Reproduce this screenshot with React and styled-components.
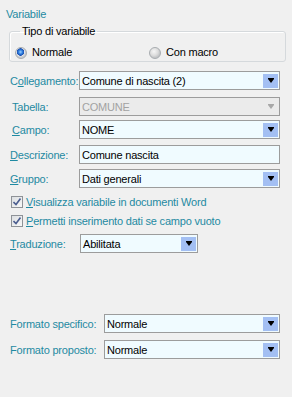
import React from "react";
import styled, { createGlobalStyle } from "styled-components";

const GlobalStyle = createGlobalStyle`
  html, body {
    margin: 0;
    padding: 0;
    background: #f0f0f0;
  }
  body {
    font-family: "Liberation Sans", Arial, sans-serif;
    font-size: 11px;
    letter-spacing: -0.2px;
  }
`;

const Panel = styled.div`
  width: 292px;
  height: 397px;
  box-sizing: border-box;
  padding-top: 8px;
  display: flex;
  flex-direction: column;
  background: #f0f0f0;
`;

const Title = styled.div`
  margin-left: 6px;
  height: 13px;
  line-height: 13px;
  color: #1f8aa2;
`;

const GroupBox = styled.fieldset`
  margin: 4px 6px 0 9px;
  padding: 8px 0 2px 5px;
  border: 1px solid #d5d9dc;
  border-radius: 3px;
  box-shadow: inset 1px 1px 0 #fff;
  min-width: 0;
`;

const Legend = styled.legend`
  margin-left: 5px;
  padding: 0 2px;
  line-height: 13px;
  color: #000;
`;

const RadioRow = styled.div`
  display: grid;
  grid-template-columns: 134px 1fr;
  height: 13px;
  align-items: center;
`;

const RadioOption = styled.label`
  display: flex;
  align-items: center;
  gap: 5px;
  color: #000;
  line-height: 13px;
`;

const RadioDot = styled.span`
  width: 12px;
  height: 12px;
  box-sizing: border-box;
  border-radius: 50%;
  border: 1px solid #a8acb0;
  background: ${(p) =>
    p.$checked
      ? "radial-gradient(circle at 45% 40%, #9fd0ff 0, #2f7fe0 2px, #1b4fb0 3.5px, #e6e8ea 4px, #c9ccd0 5px)"
      : "radial-gradient(circle at 40% 35%, #f6f6f6 0, #dcdcdc 4px, #c4c6c8 6px)"};
`;

const FieldRow = styled.div`
  display: flex;
  align-items: center;
  margin-top: ${(p) => p.$top}px;
  padding-left: 10px;
`;

const FieldLabel = styled.span`
  width: ${(p) => p.$width || 69}px;
  flex: none;
  box-sizing: border-box;
  padding-left: ${(p) => p.$indent || 0}px;
  color: #1f8aa2;
  white-space: nowrap;
`;

const Key = styled.span`
  text-decoration: underline;
  text-underline-offset: 1px;
`;

const Combo = styled.div`
  width: ${(p) => p.$width}px;
  height: 19px;
  box-sizing: border-box;
  display: flex;
  align-items: center;
  border: 1px solid #9c9c9c;
  background: ${(p) => (p.$disabled ? "#ebebeb" : "#f0fbff")};
  color: ${(p) => (p.$disabled ? "#a2a2a2" : "#000")};
`;

const ComboText = styled.span`
  flex: 1;
  padding-left: 2px;
  white-space: nowrap;
  overflow: hidden;
`;

const DropButton = styled.span`
  width: 15px;
  height: 14px;
  margin-right: 1px;
  display: flex;
  align-items: center;
  justify-content: center;
  background: ${(p) => (p.$disabled ? "transparent" : "#a3bff3")};
`;

const Arrow = styled.span`
  width: 0;
  height: 0;
  margin-top: 1px;
  border-left: 3.5px solid transparent;
  border-right: 3.5px solid transparent;
  border-top: 4px solid ${(p) => (p.$disabled ? "#a8a8a8" : "#000")};
  box-shadow: 0 -1px 0 ${(p) => (p.$disabled ? "#a8a8a8" : "#000")};
`;

const CheckRow = styled.label`
  display: flex;
  align-items: center;
  gap: 3px;
  margin-top: ${(p) => p.$top}px;
  padding-left: 11px;
  height: 13px;
  color: #1f8aa2;
  white-space: nowrap;
`;

const CheckBox = styled.span`
  width: 12px;
  height: 12px;
  box-sizing: border-box;
  border: 1px solid #8e9297;
  background: linear-gradient(135deg, #dcdfe2, #f8f8f8);
  display: flex;
  align-items: center;
  justify-content: center;
`;

function Select({ value, width, disabled }) {
  return (
    <Combo $width={width} $disabled={disabled}>
      <ComboText>{value}</ComboText>
      <DropButton $disabled={disabled}>
        <Arrow $disabled={disabled} />
      </DropButton>
    </Combo>
  );
}

function Check({ children, top }) {
  return (
    <CheckRow $top={top}>
      <CheckBox>
        <svg width="8" height="8" viewBox="0 0 8 8">
          <path d="M0.5 4 L3 6.5 L7.5 0.5" fill="none" stroke="#4b5d8f" strokeWidth="1.6" />
        </svg>
      </CheckBox>
      {children}
    </CheckRow>
  );
}

export default function App() {
  return (
    <>
      <GlobalStyle />
      <Panel>
        <Title>Variabile</Title>
        <GroupBox>
          <Legend>Tipo di variabile</Legend>
          <RadioRow>
            <RadioOption>
              <RadioDot $checked />
              Normale
            </RadioOption>
            <RadioOption>
              <RadioDot />
              Con macro
            </RadioOption>
          </RadioRow>
        </GroupBox>

        <FieldRow $top={9}>
          <FieldLabel>
            C<Key>o</Key>llegamento:
          </FieldLabel>
          <Select value="Comune di nascita (2)" width={201} />
        </FieldRow>
        <FieldRow $top={7}>
          <FieldLabel $indent={2}>Tabella:</FieldLabel>
          <Select value="COMUNE" width={201} disabled />
        </FieldRow>
        <FieldRow $top={4}>
          <FieldLabel $indent={2}>
            <Key>C</Key>ampo:
          </FieldLabel>
          <Select value="NOME" width={201} />
        </FieldRow>
        <FieldRow $top={6}>
          <FieldLabel>
            <Key>D</Key>escrizione:
          </FieldLabel>
          <Combo $width={201}>
            <ComboText>Comune nascita</ComboText>
          </Combo>
        </FieldRow>
        <FieldRow $top={5}>
          <FieldLabel>
            <Key>G</Key>ruppo:
          </FieldLabel>
          <Select value="Dati generali" width={201} />
        </FieldRow>

        <Check top={7}>
          <span>
            <Key>V</Key>isualizza variabile in documenti Word
          </span>
        </Check>
        <Check top={6}>
          <span>
            <Key>P</Key>ermetti inserimento dati se campo vuoto
          </span>
        </Check>

        <FieldRow $top={7}>
          <FieldLabel $width={70}>
            <Key>T</Key>raduzione:
          </FieldLabel>
          <Select value="Abilitata" width={118} />
        </FieldRow>

        <FieldRow $top={61}>
          <FieldLabel $width={94}>Formato specifico:</FieldLabel>
          <Select value="Normale" width={176} />
        </FieldRow>
        <FieldRow $top={7}>
          <FieldLabel $width={94}>Formato proposto:</FieldLabel>
          <Select value="Normale" width={176} />
        </FieldRow>
      </Panel>
    </>
  );
}
